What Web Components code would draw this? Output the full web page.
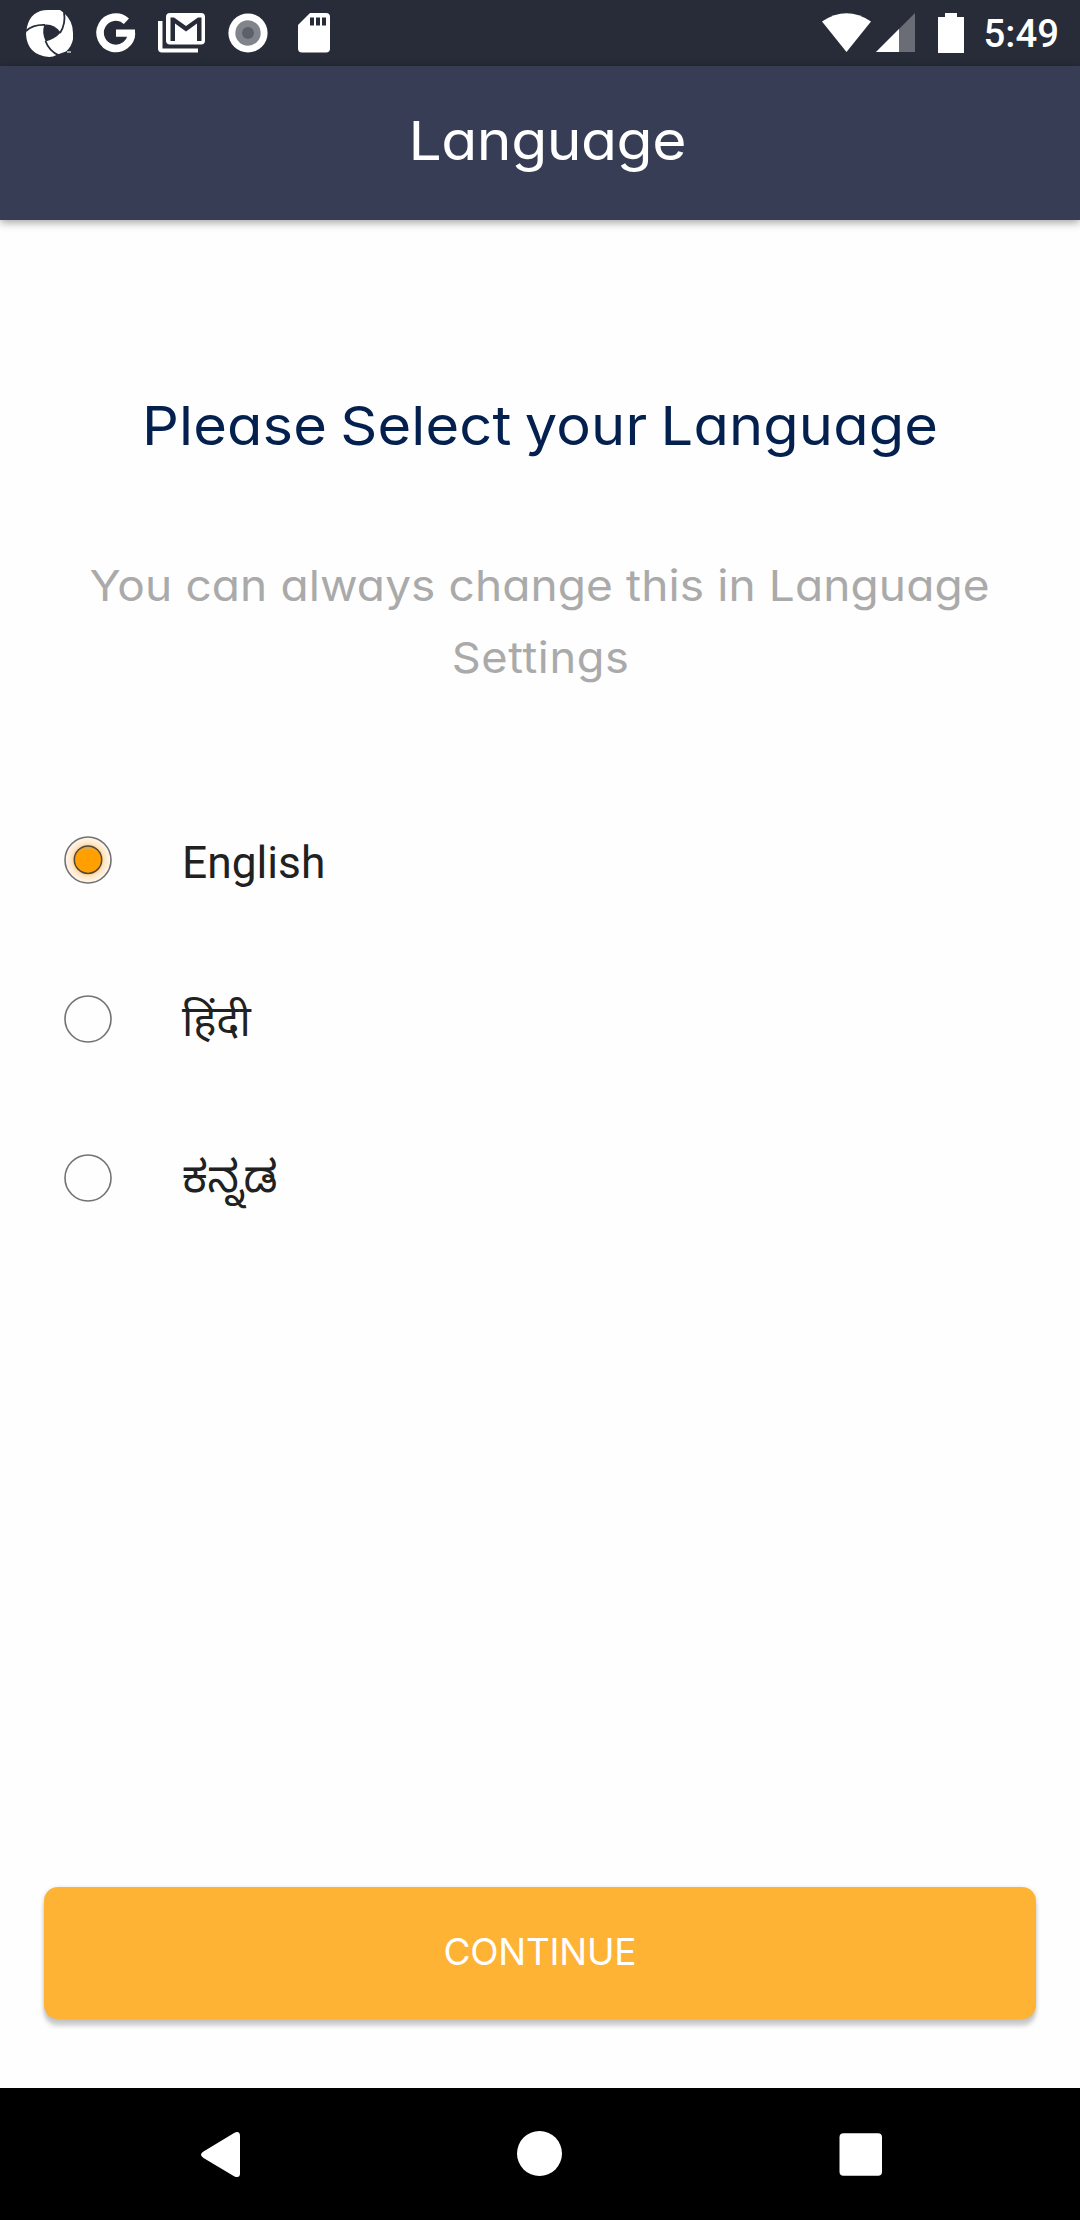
<!DOCTYPE html>
<html lang="en"><head><meta charset="utf-8"><title>Language</title>
<style>
html,body{margin:0;background:#fefefe}
body{font-family:Inter,"Noto Sans",sans-serif}
</style></head><body>
<language-screen></language-screen>
<script>
const make=(name,html,init)=>{
  const t=document.createElement('template');t.innerHTML=html;
  customElements.define(name,class extends HTMLElement{
    constructor(){super();this.attachShadow({mode:'open'}).append(t.content.cloneNode(true));}
    connectedCallback(){if(init)init(this);}
  });
};

/* Text run that fills a given width: glyphs are stretched by `stretch`, the rest is tracking. */
make('fit-text',`<style>
:host{display:flex;justify-content:center;white-space:nowrap;font-feature-settings:"cv11" 1}
span{display:block;flex:none}
</style><span><slot></slot></span>`,el=>{
  const s=el.shadowRoot.querySelector('span');
  const k=+(el.getAttribute('stretch')||1);
  const n=el.textContent.length,w=+el.getAttribute('width');
  const sp=(w/k-s.getBoundingClientRect().width)/(n-1);
  s.style.letterSpacing=sp+'px';s.style.marginRight=-sp+'px';
  s.style.transformOrigin=(w/k/2)+'px 50%';
  s.style.transform='scaleX('+k+')';
});

make('status-bar',`<style>
:host{display:flex;height:66px;background:#282c39;box-sizing:border-box;color:#fff}
svg{display:block;flex:none}
.time{font:500 38.300px/66px Roboto,sans-serif;margin-left:14px;padding-top:1px;box-sizing:border-box;height:66px}
.gap{flex:1}
</style>
<svg width="340" height="66" fill="#fff">
 <path d="M27 27Q31 10 48 10H60L64 13Q73 21 73 33V39Q72 46 66 51.500L57.500 54.500Q53 57 49 57Q27 55 26 34Z"/>
 <path d="M44.300 24.700Q54 23.500 60.700 32.500Q55 39 45.700 41.500Q41.500 33 44.300 24.700Z" fill="#282c39"/>
 <path d="M26 31Q33 24.500 45 25M64 12Q66 24 60 33M45.500 41Q49 51 59 55.500" fill="none" stroke="#282c39" stroke-width="1.800"/>
 <path d="M67 52h4" stroke="#c9cad0" stroke-width="1.500"/>
 <path d="M126.400 21.200A15.700 15.700 0 1 0 131.500 33" fill="none" stroke="#fff" stroke-width="7.600"/><path d="M116 29.500H135V33.500L134.500 36.700H116Z"/>
 <path d="M158 21h4.500v27.500h35.500v4h-36q-4 0-4-4Z"/>
 <rect x="166" y="13" width="39" height="31.500" rx="4"/>
 <path d="M170.500 41V17.500h3.500l12 8.500 12-8.500h3.500V41h-4.500V23.500l-11 8-11-8V41Z" fill="#282c39"/>
 <circle cx="248" cy="33" r="19.600"/><circle cx="248" cy="33" r="12.700" fill="#81848b"/><circle cx="248" cy="33" r="6" fill="#5c6069"/>
 <path d="M310 13h16q4 0 4 4v31.500q0 4-4 4h-24q-4 0-4-4V25Z"/>
 <path d="M310 17.500h4v8h-4ZM316 17.500h4v8h-4ZM322 17.500h4v8h-4Z" fill="#282c39"/>
</svg><div class="gap"></div>
<svg width="150" height="66" viewBox="819 0 150 66" fill="#fff">
 <path d="M821 21.500Q845.500 5 870 21.500L845.500 52Z"/>
 <path d="M914 13V52H875Z" fill="#6a6d75"/><path d="M898 29V52H875Z"/>
 <path d="M944 13h12v4h7v36h-26V17h7Z"/>
</svg><div class="time">5:49</div><svg width="21" height="66"></svg>`);

make('app-bar',`<style>
:host{display:flex;justify-content:center;height:154px;background:#363d55;color:#fff;
 font-size:54px;line-height:149px;box-shadow:0 2px 9px rgba(0,0,0,.4);padding-left:15px;box-sizing:border-box;position:relative}
</style><slot></slot>`);

make('radio-option',`<style>
:host{display:flex;align-items:center;height:159px;padding-left:64px}
svg{display:block;flex:none;width:48px;height:48px}
.dot{display:none}:host([checked]) .dot{display:block}
div{font:44.300px/60px Roboto,"Noto Sans","Noto Sans Devanagari","Noto Sans Kannada",sans-serif;color:#212121;margin-left:70px;padding-top:7px}
:host(:lang(hi)) div{font-size:43.500px}
:host(:lang(kn)) div{padding:0 0 1px}
</style>
<svg viewBox="0 0 48 48"><defs><radialGradient id="g"><stop offset=".55" stop-color="#ffcb80"/><stop offset=".75" stop-color="#ffe8cb"/><stop offset="1" stop-color="#fff9f0"/></radialGradient></defs>
<circle class="dot" cx="24" cy="24" r="23" fill="url(#g)"/>
<circle cx="24" cy="24" r="23" fill="none" stroke="#727272" stroke-width="1.600"/>
<g class="dot"><circle cx="24" cy="23.700" r="13.700" fill="#ff9f00" stroke="#4e4a40" stroke-width="1.500"/><path d="M15 15.500Q24 8 33 15.500Q24 11.500 15 15.500Z" fill="#d9ac62"/></g></svg>
<div><slot></slot></div>`);

make('action-button',`<style>
:host{display:flex;justify-content:center;height:132px;margin:0 44px;border-radius:14px;background:#ffb334;color:#fff;
 font-size:37px;line-height:129px;box-shadow:0 7px 4px rgba(0,0,0,.18),0 1px 5px rgba(0,0,0,.13)}
</style><slot></slot>`);

make('nav-bar',`<style>
:host{display:flex;height:132px;background:#000}svg{display:block}
</style><svg width="1080" height="132" viewBox="0 2088 1080 132" fill="#fff">
<path d="M203.500 2151.500L234.500 2132.700Q240 2130.500 240 2136V2173.500Q240 2178.500 234.500 2176.500L203.500 2158Q198.500 2154.500 203.500 2151.500Z"/>
<circle cx="539.500" cy="2153.500" r="22.500"/><rect x="839.500" y="2133.300" width="42.500" height="42.500" rx="4"/></svg>`);

make('language-screen',`<style>
:host{display:flex;flex-direction:column;width:1080px;height:2220px;background:#fefefe}
main{flex:1;display:flex;flex-direction:column}
header{display:flex;flex-direction:column;align-items:center;padding-top:166px}
.h{font-size:54px;line-height:80px;color:#04204e;word-spacing:-3px}
.s{font-size:43px;line-height:72px;color:#aaa}
.p{padding-top:83px;display:flex;flex-direction:column;align-items:center}
.list{padding-top:87px}
.gap{flex:1}
action-button{margin-bottom:69px}
</style>
<status-bar></status-bar>
<app-bar><fit-text width="278" stretch="1.09">Language</fit-text></app-bar>
<main><header><fit-text class="h" width="796" stretch="1.07">Please Select your Language</fit-text>
<div class="p"><fit-text class="s" width="900" stretch="1.07">You can always change this in Language</fit-text><fit-text class="s" width="177" stretch="1.05">Settings</fit-text></div></header>
<section class="list"><radio-option checked>English</radio-option><radio-option lang="hi">हिंदी</radio-option><radio-option lang="kn">ಕನ್ನಡ</radio-option></section>
<div class="gap"></div>
<action-button><fit-text width="193">CONTINUE</fit-text></action-button></main>
<nav-bar></nav-bar>`);
</script></body></html>
